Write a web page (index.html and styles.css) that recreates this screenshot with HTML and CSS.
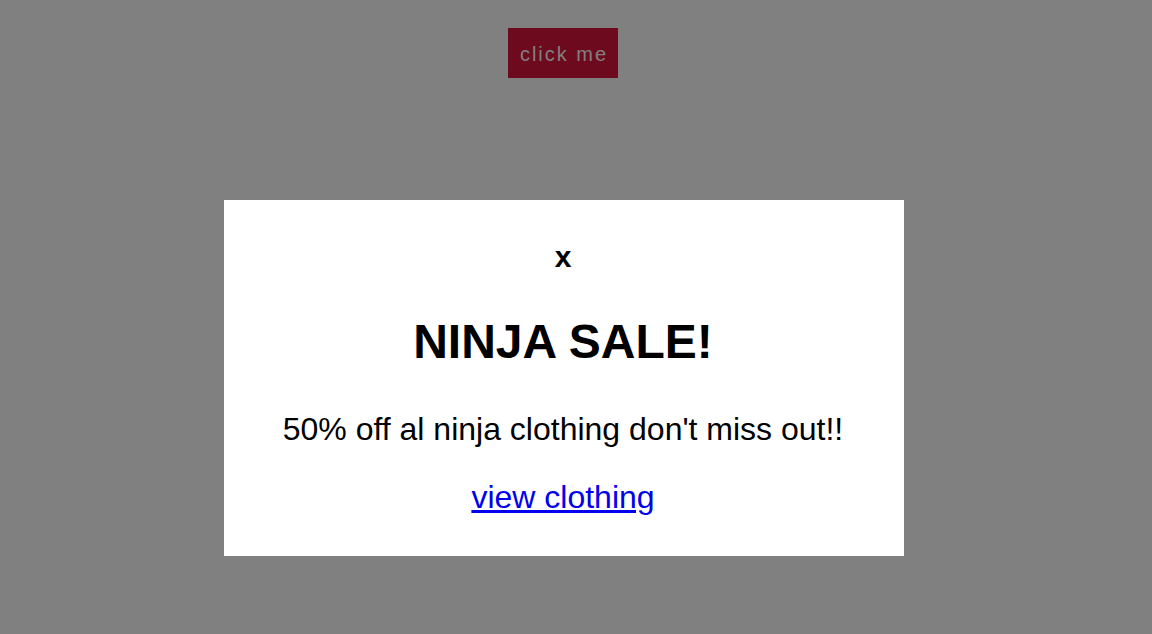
FILE: index.html
```html
<!DOCTYPE html>
<html lang="en">
<head>
<meta charset="utf-8">
<title>Ninja Sale</title>
<link rel="stylesheet" href="styles.css">
</head>
<body>
<div class="page">
  <button class="trigger" type="button">click me</button>
  <div class="modal">
    <div class="close">x</div>
    <h1 class="title">NINJA SALE!</h1>
    <p class="text">50% off al ninja clothing don't miss out!!</p>
    <a class="link" href="#">view clothing</a>
  </div>
</div>
</body>
</html>
```

FILE: styles.css
```css
html, body {
  margin: 0;
  padding: 0;
}

body {
  background: #808080;
  font-family: "Liberation Sans", Arial, sans-serif;
  height: 634px;
  overflow: hidden;
}

.page {
  width: 1128px;
  display: flex;
  flex-direction: column;
  align-items: center;
  padding-top: 28px;
}

.trigger {
  display: block;
  width: 110px;
  height: 50px;
  margin: 0 2px 0 0;
  padding: 3px 0 0 2px;
  border: none;
  background: #6e0a1e;
  color: #808080;
  font-family: "Liberation Sans", Arial, sans-serif;
  font-size: 20px;
  line-height: 47px;
  letter-spacing: 2px;
  text-align: center;
  box-sizing: border-box;
}

.modal {
  margin-top: 122px;
  width: 680px;
  box-sizing: border-box;
  padding: 39px 2px 40px 0;
  background: #ffffff;
  display: flex;
  flex-direction: column;
  align-items: center;
  text-align: center;
  color: #000;
}

.close {
  font-size: 30px;
  font-weight: bold;
  line-height: 36px;
}

.title {
  margin: 39px 0 0;
  font-size: 48px;
  font-weight: bold;
  line-height: 56px;
}

.text {
  margin: 40px 0 0;
  font-size: 32px;
  line-height: 38px;
}

.link {
  margin-top: 30px;
  font-size: 32px;
  line-height: 38px;
  color: #0000ee;
  text-decoration: underline;
}
```
